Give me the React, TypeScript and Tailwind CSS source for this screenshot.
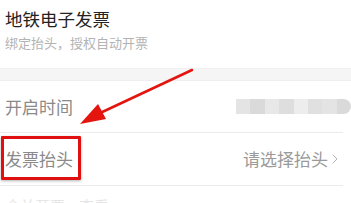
import { ChevronRight } from 'lucide-react';

const font = { fontFamily: '"Noto Sans CJK SC", "Noto Sans", sans-serif' };

function BlurredValue() {
  const shades = ['#e4e4e4', '#dadada', '#e8e8e8', '#dedede', '#ededed', '#e0e0e0', '#e4e4e4', '#dadada'];
  return (
    <div className="flex h-[15px] w-[115px] overflow-hidden rounded-r-full blur-[0.6px]">
      {shades.map((c, i) => (
        <div key={i} className="h-full flex-1" style={{ backgroundColor: c }} />
      ))}
    </div>
  );
}

export default function App() {
  return (
    <div className="relative h-[203px] w-[351px] overflow-hidden bg-white" style={font}>
      <div className="flex h-[68px] flex-col pl-[5px] pt-[7px]">
        <div className="text-[17.5px] leading-[23px] text-[#222]">地铁电子发票</div>
        <div className="mt-[4px] text-[13px] leading-[17px] text-[#b3b3b3]">绑定抬头，授权自动开票</div>
      </div>
      <div className="h-[13px] border-y border-[#efefef] bg-[#f5f5f5]" />

      <div className="mr-[8px] flex h-[52px] items-center justify-between border-b border-[#ebebeb] pl-[5px]">
        <span className="text-[17px] text-[#8a8a8a]">开启时间</span>
        <div className="-mr-[8px]">
          <BlurredValue />
        </div>
      </div>

      <div className="mr-[8px] flex h-[53px] items-center justify-between border-b border-[#ebebeb] pl-[5px]">
        <span className="text-[17px] text-[#8a8a8a]">发票抬头</span>
        <div className="flex items-center text-[17px] text-[#9a9a9a]">
          请选择抬头
          <ChevronRight className="-ml-[1px] size-[16px] text-[#b5b5b5]" strokeWidth={1.5} />
        </div>
      </div>

      <div className="flex gap-[14px] pl-[5px] pt-[11px] text-[15px] leading-[18px] text-[#e6e6e6]">
        <span>合并开票</span>
        <span>查看</span>
      </div>

      <div className="absolute left-[1px] top-[136px] h-[44px] w-[80px] rounded-[1px] border-[3px] border-[#e01010] shadow-[0_1px_3px_rgba(0,0,0,0.3)]" />

      <svg className="absolute left-0 top-0" width="351" height="203" viewBox="0 0 351 203">
        <line x1="192" y1="70" x2="98" y2="114" stroke="#e4140f" strokeWidth="2.5" strokeLinecap="round" />
        <polygon points="80,124 98,104 106,119" fill="#e4140f" />
      </svg>
    </div>
  );
}
